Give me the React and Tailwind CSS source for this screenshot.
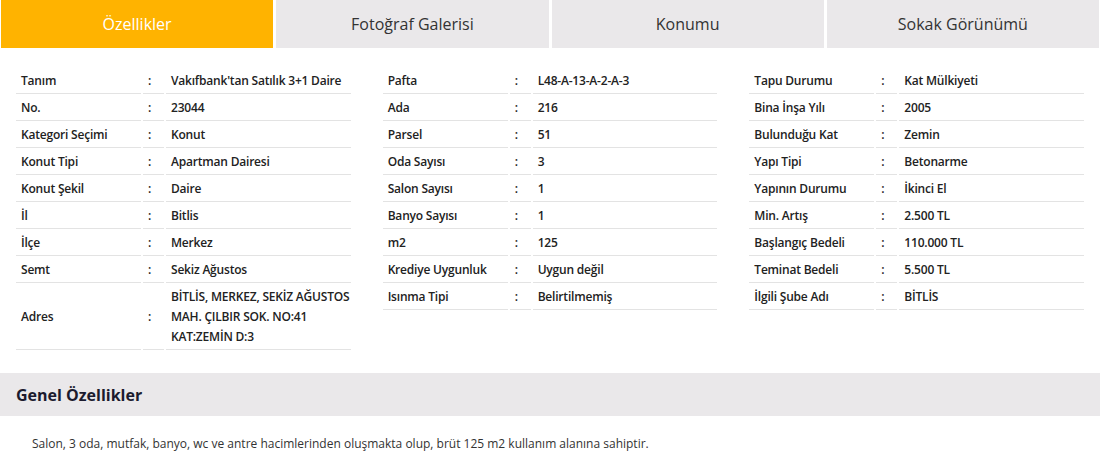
const tabs = ["Özellikler", "Fotoğraf Galerisi", "Konumu", "Sokak Görünümü"];

const columns = [
    [
        ["Tanım", "Vakıfbank'tan Satılık 3+1 Daire"],
        ["No.", "23044"],
        ["Kategori Seçimi", "Konut"],
        ["Konut Tipi", "Apartman Dairesi"],
        ["Konut Şekil", "Daire"],
        ["İl", "Bitlis"],
        ["İlçe", "Merkez"],
        ["Semt", "Sekiz Ağustos"],
        ["Adres", ["BİTLİS, MERKEZ, SEKİZ AĞUSTOS", "MAH. ÇILBIR SOK. NO:41", "KAT:ZEMİN D:3"]],
    ],
    [
        ["Pafta", "L48-A-13-A-2-A-3"],
        ["Ada", "216"],
        ["Parsel", "51"],
        ["Oda Sayısı", "3"],
        ["Salon Sayısı", "1"],
        ["Banyo Sayısı", "1"],
        ["m2", "125"],
        ["Krediye Uygunluk", "Uygun değil"],
        ["Isınma Tipi", "Belirtilmemiş"],
    ],
    [
        ["Tapu Durumu", "Kat Mülkiyeti"],
        ["Bina İnşa Yılı", "2005"],
        ["Bulunduğu Kat", "Zemin"],
        ["Yapı Tipi", "Betonarme"],
        ["Yapının Durumu", "İkinci El"],
        ["Min. Artış", "2.500 TL"],
        ["Başlangıç Bedeli", "110.000 TL"],
        ["Teminat Bedeli", "5.500 TL"],
        ["İlgili Şube Adı", "BİTLİS"],
    ],
];

function InfoTable({ rows }) {
    return (
        <table className="w-full table-fixed border-separate border-spacing-[2px] text-[12px] font-semibold text-[#222] tracking-[-0.2px]">
            <tbody>
                {rows.map(([label, value]) => (
                    <tr key={label}>
                        <td className="w-[125px] border-b border-[#e3e3e3] px-[5px] py-[2px] leading-5 whitespace-nowrap">{label}</td>
                        <td className="w-[21px] border-b border-[#e3e3e3] pl-[5px] py-[2px] leading-5">:</td>
                        <td className="border-b border-[#e3e3e3] px-[5px] py-[2px] leading-5 whitespace-nowrap">
                            {Array.isArray(value)
                                ? value.map((line) => <div key={line}>{line}</div>)
                                : value}
                        </td>
                    </tr>
                ))}
            </tbody>
        </table>
    );
}

export default function App() {
    return (
        <div className="w-[1100px] h-[473px] bg-white overflow-hidden" style={{ fontFamily: '"Open Sans", sans-serif' }}>
            <div className="flex gap-[3px] px-[1px]">
                {tabs.map((tab, i) => (
                    <div
                        key={tab}
                        className={`flex-1 h-12 flex items-center justify-center text-base ${
                            i === 0 ? "bg-[#ffb300] text-white" : "bg-[#eae8ea] text-[#333]"
                        }`}
                    >
                        {tab}
                    </div>
                ))}
            </div>

            <div className="grid grid-cols-3 pt-[19px] pb-[21px] items-start">
                {columns.map((rows, i) => (
                    <div key={i} className="px-[14px]">
                        <InfoTable rows={rows} />
                    </div>
                ))}
            </div>

            <div className="h-[43px] bg-[#eae8ea] flex items-center px-4">
                <h2 className="text-base font-bold text-[#1b1b2e]">Genel Özellikler</h2>
            </div>

            <p className="pt-[18px] pl-8 text-[12px] leading-5 text-[#333]">
                Salon, 3 oda, mutfak, banyo, wc ve antre hacimlerinden oluşmakta olup, brüt 125 m2 kullanım alanına sahiptir.
            </p>
        </div>
    );
}
